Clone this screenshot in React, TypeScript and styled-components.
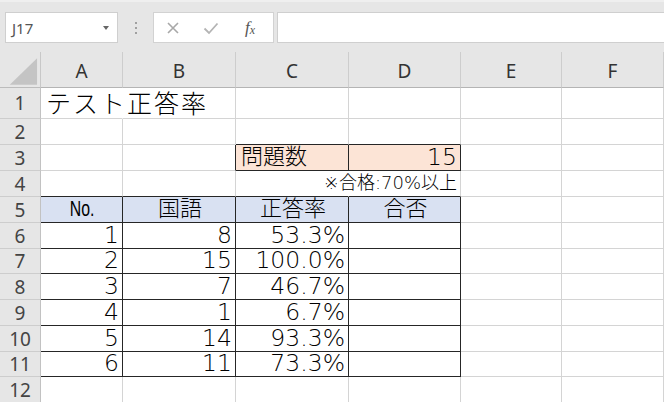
import React from 'react'
import styled, { createGlobalStyle } from 'styled-components'

const GlobalStyle = createGlobalStyle`
    html, body {
        margin: 0;
        padding: 0;
        background: #e6e6e6;
    }
    * {
        box-sizing: border-box;
    }
`

const COLS = [41, 82, 113, 113, 112, 101, 102]
const ROW_HEIGHTS = [36, 31, 26, 26, 26, 26, 26, 25, 26, 26, 26, 25, 26]
const LETTERS = ['A', 'B', 'C', 'D', 'E', 'F']

const GRID_LINE = '#d4d4d4'
const DARK_LINE = '#262626'
const HEADER_FILL = '#d9e1f2'
const PEACH_FILL = '#fce4d6'

interface CellSpec {
    text?: string
    align?: 'left' | 'right' | 'center'
    fill?: string
    size?: number
    spacing?: number
    darkRight?: boolean
    darkBottom?: boolean
    noRight?: boolean
}

// sheet content, keyed by "A1" style references
const sheet: Record<string, CellSpec> = {
    A1: { text: 'テスト正答率', size: 25, spacing: 2, noRight: true },
    C2: { darkBottom: true },
    D2: { darkBottom: true },
    B3: { darkRight: true },
    C3: { text: '問題数', size: 22, fill: PEACH_FILL, darkRight: true, darkBottom: true },
    D3: { text: '15', align: 'right', fill: PEACH_FILL, darkRight: true, darkBottom: true },
    A4: { darkBottom: true },
    B4: { darkBottom: true },
    C4: { darkBottom: true, noRight: true },
    D4: { text: '※合格:70%以上', align: 'right', size: 18, darkBottom: true },
}

const tableHead = ['No.', '国語', '正答率', '合否']
const tableRows = [
    ['1', '8', '53.3%', ''],
    ['2', '15', '100.0%', ''],
    ['3', '7', '46.7%', ''],
    ['4', '1', '6.7%', ''],
    ['5', '14', '93.3%', ''],
    ['6', '11', '73.3%', ''],
]

tableHead.forEach((text, i) => {
    sheet[`${LETTERS[i]}5`] = { text, size: 22, align: 'center', fill: HEADER_FILL, darkRight: true, darkBottom: true }
})
tableRows.forEach((row, r) => {
    row.forEach((text, i) => {
        sheet[`${LETTERS[i]}${r + 6}`] = { text, align: 'right', darkRight: true, darkBottom: true }
    })
})

const App = () => {
    return (
        <Window>
            <GlobalStyle />
            <FormulaBar>
                <NameBox>
                    <NameText>J17</NameText>
                    <DropArrow />
                </NameBox>
                <Grip>
                    <span />
                    <span />
                    <span />
                </Grip>
                <FxBox>
                    <FxIcon color='#a8a8a8'>
                        <svg width='14' height='14' viewBox='0 0 14 14'>
                            <path d='M2 2 L12 12 M12 2 L2 12' stroke='currentColor' strokeWidth='1.6' fill='none' />
                        </svg>
                    </FxIcon>
                    <FxIcon color='#b4b4b4'>
                        <svg width='16' height='14' viewBox='0 0 16 14'>
                            <path d='M1.5 7.5 L6 12 L14.5 2.5' stroke='currentColor' strokeWidth='1.8' fill='none' />
                        </svg>
                    </FxIcon>
                    <FxLabel>
                        f<sub>x</sub>
                    </FxLabel>
                </FxBox>
                <FormulaInput />
            </FormulaBar>
            <Grid>
                <Corner>
                    <svg width='41' height='36' viewBox='0 0 41 36'>
                        <polygon points='10,33 38,33 38,6' fill='#c4c4c4' />
                    </svg>
                </Corner>
                {LETTERS.map((l) => (
                    <ColHeader key={l}>{l}</ColHeader>
                ))}
                {ROW_HEIGHTS.slice(1).map((_, r) => (
                    <React.Fragment key={r}>
                        <RowHeader>{r + 1}</RowHeader>
                        {LETTERS.map((l) => {
                            const spec = sheet[`${l}${r + 1}`] || {}
                            return (
                                <Cell
                                    key={l}
                                    $fill={spec.fill}
                                    $align={spec.align || 'left'}
                                    $size={spec.size || 23.5}
                                    $spacing={spec.spacing || 0}
                                    $darkRight={spec.darkRight}
                                    $darkBottom={spec.darkBottom}
                                    $noRight={spec.noRight}
                                >
                                    {spec.text === 'No.' ? (
                                        <NoMark>No.</NoMark>
                                    ) : (
                                        spec.text && <CellText>{spec.text}</CellText>
                                    )}
                                </Cell>
                            )
                        })}
                    </React.Fragment>
                ))}
            </Grid>
        </Window>
    )
}

const Window = styled.div`
    width: 664px;
    height: 402px;
    overflow: hidden;
    display: flex;
    flex-direction: column;
    background: #e6e6e6;
    font-family: 'Noto Sans CJK JP', 'Noto Sans', sans-serif;
`

const FormulaBar = styled.div`
    height: 52px;
    flex-shrink: 0;
    display: flex;
    align-items: flex-start;
    padding: 10px 0 0 5px;
    border-top: 2px solid #efefef;
`

const NameBox = styled.div`
    width: 113px;
    height: 31px;
    background: #fff;
    border: 1px solid #cfcfcf;
    display: flex;
    align-items: center;
    justify-content: space-between;
    padding: 0 8px 0 6px;
`

const NameText = styled.span`
    font-family: 'Noto Sans', sans-serif;
    font-size: 15px;
    color: #555;
`

const DropArrow = styled.span`
    width: 0;
    height: 0;
    border-left: 3px solid transparent;
    border-right: 3px solid transparent;
    border-top: 4px solid #666;
`

const Grip = styled.div`
    width: 35px;
    height: 31px;
    display: flex;
    flex-direction: column;
    align-items: center;
    justify-content: center;
    gap: 3px;

    span {
        width: 2px;
        height: 2px;
        background: #a0a0a0;
    }
`

const FxBox = styled.div`
    width: 121px;
    height: 31px;
    background: #fff;
    border: 1px solid #d2d2d2;
    display: flex;
    align-items: center;
    padding: 0 0 0 11px;
    gap: 22px;
`

const FxIcon = styled.span<{ color: string }>`
    display: flex;
    width: 16px;
    justify-content: center;
    color: ${({ color }) => color};
`

const FxLabel = styled.span`
    font-family: 'Liberation Serif', serif;
    font-style: italic;
    font-size: 17px;
    color: #555;
    margin-left: 4px;

    sub {
        font-size: 12px;
        vertical-align: -1px;
    }
`

const FormulaInput = styled.div`
    flex: 1;
    height: 31px;
    margin-left: 3px;
    background: #fff;
    border: 1px solid #cfcfcf;
    border-right: none;
`

const Grid = styled.div`
    display: grid;
    grid-template-columns: ${COLS.map((c) => `${c}px`).join(' ')};
    grid-template-rows: ${ROW_HEIGHTS.map((h) => `${h}px`).join(' ')};
    background: #fff;
    flex: 1;
`

const Corner = styled.div`
    background: #e6e6e6;
    border-right: 1px solid #c8c8c8;
    border-bottom: 1px solid #bcbcbc;
    display: flex;
`

const ColHeader = styled.div`
    background: #e6e6e6;
    border-right: 1px solid #cdcdcd;
    border-bottom: 1px solid #b4b4b4;
    display: flex;
    align-items: center;
    justify-content: center;
    font-family: 'Noto Sans', sans-serif;
    font-size: 19px;
    color: #333;
    padding-top: 2px;
`

const RowHeader = styled.div`
    background: #e6e6e6;
    border-right: 1px solid #c2c2c2;
    border-bottom: 1px solid #cdcdcd;
    display: flex;
    align-items: center;
    justify-content: center;
    font-family: 'Noto Sans', sans-serif;
    font-size: 19px;
    color: #444;
`

const Cell = styled.div<{
    $fill?: string
    $align: string
    $size: number
    $spacing: number
    $darkRight?: boolean
    $darkBottom?: boolean
    $noRight?: boolean
}>`
    display: flex;
    align-items: flex-end;
    justify-content: ${({ $align }) =>
        $align === 'right' ? 'flex-end' : $align === 'center' ? 'center' : 'flex-start'};
    padding: 0 3px 0 5px;
    white-space: nowrap;
    overflow: visible;
    font-family: 'DejaVu Sans', 'Noto Sans CJK JP', sans-serif;
    font-weight: 300;
    font-size: ${({ $size }) => $size}px;
    letter-spacing: ${({ $spacing }) => $spacing}px;
    line-height: 20px;
    color: #000;
    background: ${({ $fill }) => $fill || 'transparent'};
    border-right: 1px solid
        ${({ $darkRight, $noRight }) => ($darkRight ? DARK_LINE : $noRight ? 'transparent' : GRID_LINE)};
    border-bottom: 1px solid ${({ $darkBottom }) => ($darkBottom ? DARK_LINE : GRID_LINE)};
`

const CellText = styled.span`
    padding-bottom: 3px;
`

const NoMark = styled.span`
    display: inline-block;
    font-family: 'Liberation Sans', sans-serif;
    font-size: 22px;
    transform: scaleX(0.72);
    padding-bottom: 3px;
`

export default App
